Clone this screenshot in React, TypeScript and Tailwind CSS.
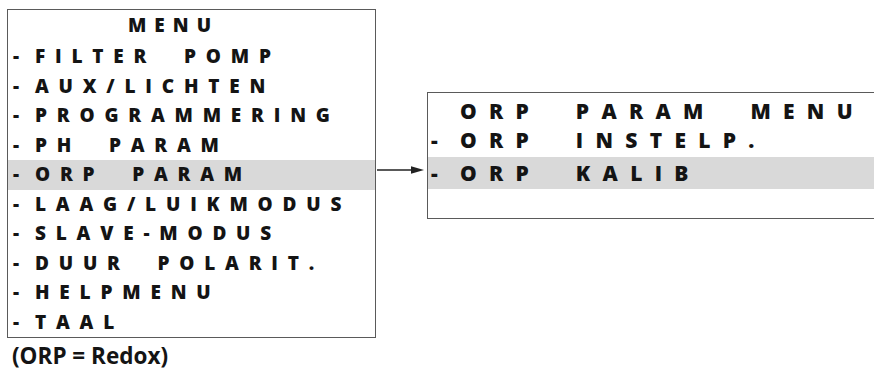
import React from 'react';

const mainItems = [
  'FILTER POMP',
  'AUX/LICHTEN',
  'PROGRAMMERING',
  'PH PARAM',
  'ORP PARAM',
  'LAAG/LUIKMODUS',
  'SLAVE-MODUS',
  'DUUR POLARIT.',
  'HELPMENU',
  'TAAL',
];

const orpItems = ['ORP INSTELP.', 'ORP KALIB'];

const font = { fontFamily: '"Open Sans", "Liberation Sans", sans-serif' };

const MenuRow: React.FC<{ label: string; active?: boolean }> = ({ label, active }) => (
  <div className={`flex items-center h-[29.5px] ${active ? 'bg-[#d9d9d9]' : ''}`}>
    <span className="w-[27px] pl-[5px] text-[19px] leading-none font-extrabold text-[#141414]">-</span>
    <span className="text-[19px] leading-none font-extrabold text-[#141414] tracking-[9.8px] [word-spacing:13px] whitespace-pre">
      {label}
    </span>
  </div>
);

const SubRow: React.FC<{ label: string; active?: boolean; h: string }> = ({ label, active, h }) => (
  <div className={`flex items-center ${h} ${active ? 'bg-[#d9d9d9]' : ''}`}>
    <span className="w-[32px] pl-[3px] text-[21px] leading-none font-extrabold text-[#141414]">-</span>
    <span className="text-[21px] leading-none font-extrabold text-[#141414] tracking-[12.3px] [word-spacing:17px] whitespace-pre">
      {label}
    </span>
  </div>
);

export default function App() {
  return (
    <div className="w-[874px] h-[372px] overflow-hidden bg-white pl-[7px] pt-[9px]" style={font}>
      <div className="flex items-start">
        <div className="flex flex-col shrink-0">
          <div className="w-[369px] border border-[#5a5a5a] flex flex-col">
            <div className="h-[32px] pt-[4px] pl-[120px]">
              <span className="text-[19px] leading-none font-extrabold text-[#141414] tracking-[8px]">MENU</span>
            </div>
            {mainItems.map((item) => (
              <MenuRow key={item} label={item} active={item === 'ORP PARAM'} />
            ))}
          </div>
          <p className="mt-[7px] pl-[5px] text-[22.5px] leading-none font-bold text-[#141414]">(ORP = Redox)</p>
        </div>

        <svg width="51" height="10" viewBox="0 0 51 10" className="mt-[156px] shrink-0">
          <line x1="1" y1="5" x2="40" y2="5" stroke="#222" strokeWidth="1.3" />
          <polygon points="35,1.2 48,5 35,8.8" fill="#222" />
        </svg>

        <div className="mt-[83px] w-[460px] shrink-0 border border-r-0 border-[#5a5a5a] flex flex-col">
          <div className="h-[31px] pt-[8px] pl-[32px]">
            <span className="text-[21px] leading-none font-extrabold text-[#141414] tracking-[12.3px] [word-spacing:17px] whitespace-pre">
              ORP PARAM MENU
            </span>
          </div>
          <SubRow label={orpItems[0]} h="h-[33px]" />
          <SubRow label={orpItems[1]} h="h-[32px]" active />
          <div className="h-[29px]" />
        </div>
      </div>
    </div>
  );
}
